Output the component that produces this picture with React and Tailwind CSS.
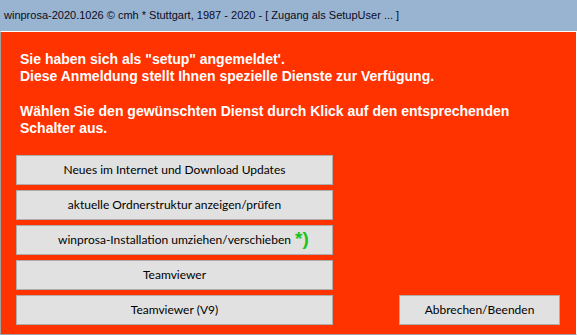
const buttons = [
  "Neues im Internet und Download Updates",
  "aktuelle Ordnerstruktur anzeigen/prüfen",
  "winprosa-Installation umziehen/verschieben",
  "Teamviewer",
];

function WinButton({ children, className = "" }) {
  return (
    <button
      className={`relative h-[30px] bg-[#e1e1e1] border border-[#adadad] text-[#000000] text-[12px] font-['Lato',sans-serif] flex items-center justify-center ${className}`}
    >
      {children}
    </button>
  );
}

export default function App() {
  return (
    <div className="w-[577px] h-[335px] bg-[#99b4d1] flex flex-col overflow-hidden font-['Liberation_Sans',Arial,sans-serif]">
      <div className="h-[31px] flex items-center pl-[4px] text-[11px] text-[#0a0a1e]">
        winprosa-2020.1026 © cmh * Stuttgart, 1987 - 2020 - [ Zugang als SetupUser ... ]
      </div>

      <div className="flex-1 flex border-t border-t-white border-r border-r-white border-l border-l-[#a0a0a0] border-b border-b-[#a0a0a0]">
        <div className="flex-1 bg-[#ff3300] flex flex-col pl-[15px] pr-[16px]">
          <div className="pt-[19px] pl-[4px] text-white font-bold text-[14px] leading-[17.3px]">
            <p>Sie haben sich als "setup" angemeldet'.</p>
            <p>Diese Anmeldung stellt Ihnen spezielle Dienste zur Verfügung.</p>
            <p>&nbsp;</p>
            <p>Wählen Sie den gewünschten Dienst durch Klick auf den entsprechenden</p>
            <p>Schalter aus.</p>
          </div>

          <div className="mt-[18px] flex flex-col gap-[5px]">
            {buttons.map((label, i) => (
              <WinButton key={label} className="w-[317px]">
                {label}
                {i === 2 && (
                  <span className="absolute left-[278px] top-[0px] text-[#19c419] font-bold text-[19px] leading-[26px] font-['Liberation_Sans',Arial,sans-serif]">
                    *)
                  </span>
                )}
              </WinButton>
            ))}
            <div className="flex justify-between">
              <WinButton className="w-[317px]">Teamviewer (V9)</WinButton>
              <WinButton className="w-[161px]">Abbrechen/Beenden</WinButton>
            </div>
          </div>
        </div>
      </div>
    </div>
  );
}
